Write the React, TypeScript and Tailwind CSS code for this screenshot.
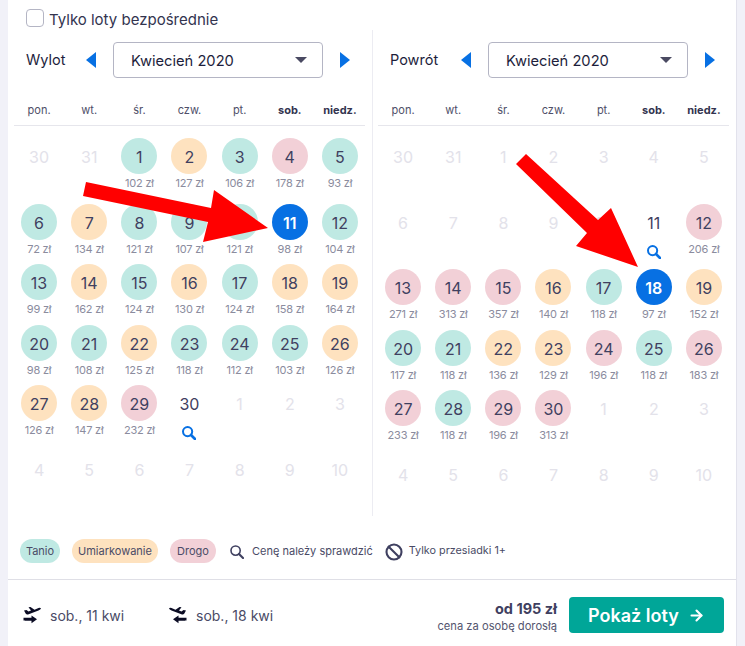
import { ArrowRight, Ban } from 'lucide-react';

type Tone = 'g' | 'o' | 'r' | 'sel';
type Day = { n: number; tone?: Tone; price?: number; check?: boolean };

const toneClass: Record<Tone, string> = {
  g: 'bg-[#bfe9e3] text-[#3f4060]',
  o: 'bg-[#fee2bf] text-[#3f4060]',
  r: 'bg-[#f2d0d7] text-[#3f4060]',
  sel: 'bg-[#0770e3] text-white font-semibold',
};

const WEEKDAYS = ['pon.', 'wt.', 'śr.', 'czw.', 'pt.', 'sob.', 'niedz.'];

const d = (n: number, tone: Tone, price: number): Day => ({ n, tone, price });
const off = (...ns: number[]): Day[] => ns.map((n) => ({ n }));

const outbound: { height: string; days: Day[] }[] = [
  {
    height: 'h-[66px]',
    days: [...off(30, 31), d(1, 'g', 102), d(2, 'o', 127), d(3, 'g', 106), d(4, 'r', 178), d(5, 'g', 93)],
  },
  {
    height: 'h-[60px]',
    days: [d(6, 'g', 72), d(7, 'o', 134), d(8, 'g', 121), d(9, 'g', 107), d(10, 'g', 121), d(11, 'sel', 98), d(12, 'g', 104)],
  },
  {
    height: 'h-[61px]',
    days: [d(13, 'g', 99), d(14, 'o', 162), d(15, 'g', 124), d(16, 'o', 130), d(17, 'g', 124), d(18, 'o', 158), d(19, 'o', 164)],
  },
  {
    height: 'h-[60px]',
    days: [d(20, 'g', 98), d(21, 'g', 108), d(22, 'o', 125), d(23, 'g', 118), d(24, 'g', 112), d(25, 'g', 103), d(26, 'o', 126)],
  },
  {
    height: 'h-[66px]',
    days: [d(27, 'o', 126), d(28, 'o', 147), d(29, 'r', 232), { n: 30, check: true }, ...off(1, 2, 3)],
  },
  { height: 'h-[40px]', days: off(4, 5, 6, 7, 8, 9, 10) },
];

const inbound: { height: string; days: Day[] }[] = [
  { height: 'h-[66px]', days: off(30, 31, 1, 2, 3, 4, 5) },
  {
    height: 'h-[65px]',
    days: [...off(6, 7, 8, 9, 10), { n: 11, check: true }, d(12, 'r', 206)],
  },
  {
    height: 'h-[61px]',
    days: [d(13, 'r', 271), d(14, 'r', 313), d(15, 'r', 357), d(16, 'o', 140), d(17, 'g', 118), d(18, 'sel', 97), d(19, 'o', 152)],
  },
  {
    height: 'h-[60px]',
    days: [d(20, 'g', 117), d(21, 'g', 118), d(22, 'o', 136), d(23, 'o', 129), d(24, 'r', 196), d(25, 'g', 118), d(26, 'r', 183)],
  },
  {
    height: 'h-[66px]',
    days: [d(27, 'r', 233), d(28, 'g', 118), d(29, 'r', 196), d(30, 'r', 313), ...off(1, 2, 3)],
  },
  { height: 'h-[40px]', days: off(4, 5, 6, 7, 8, 9, 10) },
];

function Triangle({ dir }: { dir: 'left' | 'right' }) {
  return (
    <svg width="10" height="16" viewBox="0 0 10 16" className="shrink-0">
      <polygon points={dir === 'left' ? '10,0 10,16 0,8' : '0,0 0,16 10,8'} fill="#0770e3" />
    </svg>
  );
}

function Magnifier({ className, thick }: { className: string; thick?: boolean }) {
  return (
    <svg width="14" height="14" viewBox="0 0 14 14" fill="none" stroke="currentColor" className={`shrink-0 ${className}`}>
      <circle cx="5.6" cy="5.6" r="4.6" strokeWidth={thick ? 2 : 1.6} />
      <line x1="9" y1="9" x2="13" y2="13" strokeWidth={thick ? 2.6 : 2.2} strokeLinecap="round" />
    </svg>
  );
}

function DayCell({ day }: { day: Day }) {
  const isOff = !day.tone && !day.check;
  return (
    <div className="flex flex-col items-center">
      <div
        className={`flex h-9 w-9 items-center justify-center rounded-full pt-[2px] text-[16px] ${
          day.tone ? toneClass[day.tone] : isOff ? 'text-[#e3e2ea]' : 'text-[#3f4060]'
        }`}
      >
        {day.n}
      </div>
      {day.price !== undefined && (
        <div className="mt-[2px] text-[11px] leading-[14px] tracking-[-0.2px] whitespace-nowrap text-[#8b8c9e]">
          {day.price} zł
        </div>
      )}
      {day.check && <Magnifier thick className="mt-[5px] text-[#0770e3]" />}
    </div>
  );
}

function Calendar({
  label,
  labelWidth,
  selectWidth,
  rows,
  className,
}: {
  label: string;
  labelWidth: string;
  selectWidth: string;
  rows: { height: string; days: Day[] }[];
  className: string;
}) {
  return (
    <div className={className}>
      <div className="mt-3 flex h-9 items-center pl-3">
        <span className={`${labelWidth} text-[14.5px] text-[#1d1e3c]`}>{label}</span>
        <Triangle dir="left" />
        <div className={`${selectWidth} mx-[17px] flex h-9 items-center justify-between rounded border border-[#b4b5c4] pl-[17px] pr-[15px] text-[14.7px] text-[#1d1e3c]`}>
          <span className="pt-[2px]">Kwiecień 2020</span>
          <svg width="12" height="6" viewBox="0 0 12 6">
            <polygon points="0,0 12,0 6,6" fill="#4a4a62" />
          </svg>
        </div>
        <Triangle dir="right" />
      </div>
      <div className="grid h-[48px] w-[351px] grid-cols-7 border-b border-[#e6e6ec] pt-6">
        {WEEKDAYS.map((w, i) => (
          <div
            key={w}
            className={`h-4 text-center text-[11px] leading-4 ${i > 4 ? 'font-bold text-[#33344f]' : 'text-[#4f5069]'}`}
          >
            {w}
          </div>
        ))}
      </div>
      <div className="w-[351px] pt-[12px]">
        {rows.map((row) => (
          <div key={row.days[0].n + row.height} className={`grid grid-cols-7 ${row.height}`}>
            {row.days.map((day, i) => (
              <DayCell key={i} day={day} />
            ))}
          </div>
        ))}
      </div>
    </div>
  );
}

function Pill({ className, children }: { className: string; children: string }) {
  return (
    <span className={`flex h-6 items-center justify-center rounded-xl pt-[1px] text-[11px] text-[#4a4b66] ${className}`}>
      {children}
    </span>
  );
}

function FlightIcon({ flip }: { flip?: boolean }) {
  return (
    <svg width="18" height="17" viewBox="0 0 18 17" className={`shrink-0 ${flip ? '-scale-x-100' : ''}`}>
      <path
        d="M1 3.5 L3.5 3 L5.5 4.5 L8 3.6 L5.5 0.3 L7.5 0 L11.5 2.7 L15.5 1 Q17.5 0.6 18 1.4 Q17.6 2.6 15.5 3.4 L5 7.5 Q3.5 7.8 2.8 6.8 Z"
        fill="#0b0c24"
      />
      <path d="M0.5 10.8 H8.5 V8.5 L14 12.3 L8.5 16.2 V13.8 H2 V13.5 H0.5 Z" fill="#0b0c24" />
    </svg>
  );
}

export default function App() {
  return (
    <div className="flex h-[646px] w-[745px] overflow-hidden bg-[#f1f1f8] font-['Inter',sans-serif]">
      <div className="relative ml-2 flex h-full w-[729px] flex-col border-r border-[#e2e2ec] bg-white">
        <label className="flex h-[30px] items-start gap-[5px] pl-[18px] pt-[9px] text-[15px] leading-[18px] text-[#33344f]">
          <span className="h-[18px] w-[18px] rounded-[4px] border border-[#b4b5c4]" />
          <span className="pt-[2px]">Tylko loty bezpośrednie</span>
        </label>

        <div className="flex h-[486px]">
          <Calendar
            label="Wylot"
            labelWidth="w-[60px]"
            selectWidth="w-[210px]"
            rows={outbound}
            className="w-[365px] border-r border-[#ececf2] pl-[6px]"
          />
          <Calendar
            label="Powrót"
            labelWidth="w-[71px]"
            selectWidth="w-[200px]"
            rows={inbound}
            className="pl-[5px]"
          />
        </div>

        <div className="flex h-[64px] items-start border-b border-[#dfdfe6] pl-3 pt-[23px]">
          <div className="flex gap-3">
            <Pill className="w-[40px] bg-[#bfe9e3]">Tanio</Pill>
            <Pill className="w-[86px] bg-[#fee2bf]">Umiarkowanie</Pill>
            <Pill className="w-[46px] bg-[#f2d0d7]">Drogo</Pill>
          </div>
          <span className="ml-[14px] flex h-6 items-center gap-2 pt-[1px] text-[11px] text-[#4a4b66]">
            <Magnifier className="text-[#3f4060]" />
            Cenę należy sprawdzić
          </span>
          <span className="ml-3 flex h-6 items-center gap-[6px] pt-[1px] text-[10.8px] text-[#4a4b66]">
            <Ban size={18} strokeWidth={2.8} className="text-[#3f4060]" />
            Tylko przesiadki 1+
          </span>
        </div>

        <div className="flex flex-1 items-start pl-[15px] pr-3 pt-[17px]">
          <div className="flex h-9 items-center gap-[9px] text-[14px] text-[#4a4b66]">
            <FlightIcon />
            <span className="w-[110px]">sob., 11 kwi</span>
            <FlightIcon flip />
            <span>sob., 18 kwi</span>
          </div>
          <div className="ml-auto mr-3 flex h-9 flex-col items-end pt-[2px]">
            <span className="text-[14.5px] leading-[20px] font-bold text-[#3f4060]">od 195 zł</span>
            <span className="text-[11.2px] leading-[14px] text-[#55566f]">cena za osobę dorosłą</span>
          </div>
          <button
            type="button"
            className="flex h-9 w-[155px] items-center justify-between rounded bg-[#00a698] pl-[19px] pr-[19px] text-[18px] font-semibold text-white"
          >
            Pokaż loty
            <ArrowRight size={17} strokeWidth={3} />
          </button>
        </div>

        {/* red annotation arrows drawn on top of the screenshot */}
        <svg className="pointer-events-none absolute -left-2 top-0" width="745" height="646">
          <polygon points="86,182 83,196 208,222 203,242 268,228 214,190 211,208" fill="#ff0000" />
          <polygon points="526,154 516,164 587,233 576,246 638,267 611,208 598,220" fill="#ff0000" />
        </svg>
      </div>
    </div>
  );
}
